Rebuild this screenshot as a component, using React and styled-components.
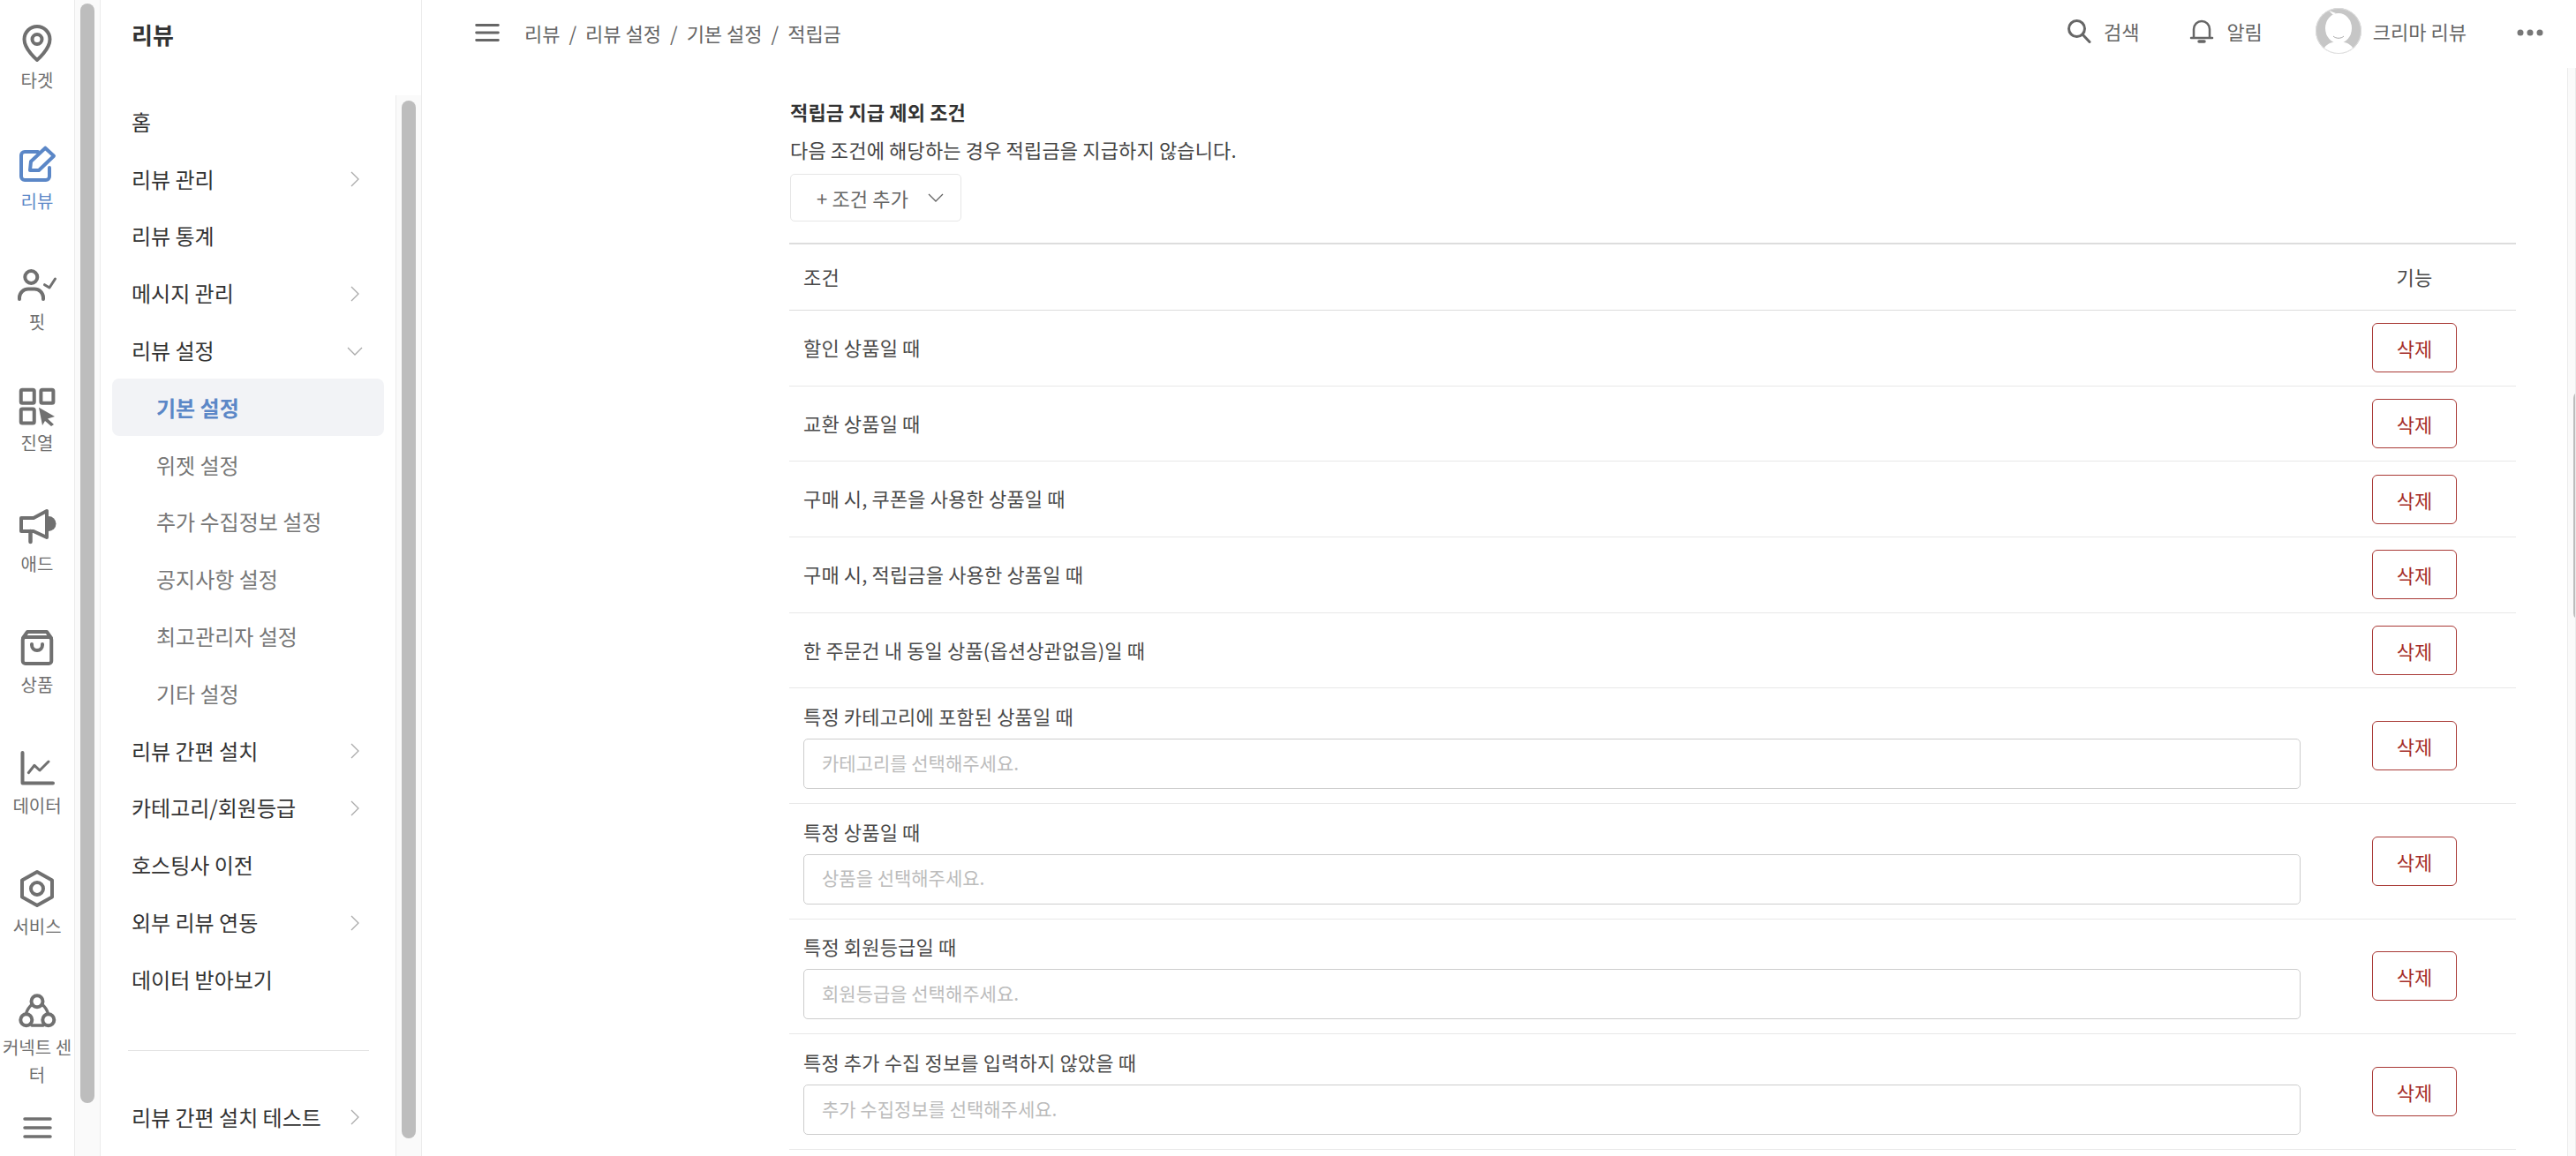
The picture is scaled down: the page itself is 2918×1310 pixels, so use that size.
import React from "react";
import styled, { createGlobalStyle } from "styled-components";

const GlobalStyle = createGlobalStyle`
  * { box-sizing: border-box; }
  html, body { margin: 0; height: 100%; background: #fff; }
  body {
    font-family: "Noto Sans CJK KR", "Noto Sans", "Liberation Sans", sans-serif;
    color: #444;
    overflow: hidden;
  }
`;

const Page = styled.div`
  display: flex;
  height: 1310px;
  overflow: hidden;
`;

/* scrollbars */
const Track = styled.div`
  flex: none;
  width: ${props => props.$width || 30}px;
  padding: ${props => props.$top || 0}px 0 0 6px;
  background: #fafafa;
  border-left: 1px solid #ebebeb;
  border-right: 1px solid #ebebeb;
  overflow: hidden;
`;

const Thumb = styled.div`
  width: 16px;
  height: ${props => props.$height}px;
  border-radius: 8px;
  background: #bdbdbd;
`;

/* icon rail */
const Rail = styled.nav`
  flex: none;
  width: 84px;
  height: 100%;
  display: flex;
  flex-direction: column;
`;

const RailItem = styled.div`
  flex: none;
  height: 137px;
  padding-top: 25px;
  display: flex;
  flex-direction: column;
  align-items: center;
  gap: 4px;
  color: ${props => (props.$active ? "#5b87c7" : "#707070")};
  font-size: 20px;
  line-height: 31px;
  text-align: center;
  svg { flex: none; }
`;

const RailLabel = styled.span`
  width: 84px;
  margin-top: -2px;
`;

const RailFoot = styled.div`
  margin-top: auto;
  padding-bottom: 19px;
  display: flex;
  justify-content: center;
  color: #707070;
`;

/* menu panel */
const Panel = styled.aside`
  flex: none;
  width: 364px;
  height: 100%;
  display: flex;
  flex-direction: column;
`;

const PanelHead = styled.div`
  flex: none;
  height: 108px;
  padding: 15px 0 0 35px;
  font-size: 26px;
  line-height: 48px;
  font-weight: 700;
  color: #333;
  border-right: 1px solid #ebebeb;
`;

const PanelBody = styled.div`
  flex: 1;
  min-height: 0;
  display: flex;
`;

const Menu = styled.ul`
  flex: 1;
  margin: -3px 0 0;
  padding: 0 13px;
  list-style: none;
`;

const MenuItem = styled.li`
  height: 64.8px;
  display: flex;
  align-items: center;
  justify-content: space-between;
  padding: 0 24px 0 ${props => (props.$sub ? 50 : 22)}px;
  border-radius: 8px;
  font-size: 24px;
  font-weight: ${props => (props.$active ? 700 : 400)};
  color: ${props => (props.$active ? "#5b87c7" : props.$sub ? "#777" : "#333")};
  background: ${props => (props.$active ? "#f2f3f6" : "transparent")};
  svg { margin-top: 2px; }
`;

const MenuRule = styled.li`
  height: 1px;
  margin: 48px 17px 42px 18px;
  background: #e2e2e2;
`;

/* main area */
const Main = styled.main`
  flex: 1;
  min-width: 0;
  height: 100%;
  display: flex;
  flex-direction: column;
`;

const TopBar = styled.header`
  flex: none;
  height: 77px;
  display: flex;
  align-items: center;
  padding: 0 37px 3px 60px;
  color: #666;
  font-size: 22px;
`;

const Crumbs = styled.div`
  margin-left: 28px;
  display: flex;
  gap: 10px;
  white-space: nowrap;
`;

const TopAction = styled.div`
  display: flex;
  align-items: center;
  gap: ${props => props.$inner || 14}px;
  margin-left: ${props => props.$gap || 0}px;
  margin-top: -4px;
  white-space: nowrap;
`;

const TopRight = styled.div`
  margin-left: auto;
  display: flex;
  align-items: center;
`;

const Dots = styled.svg`
  margin-left: 57px;
`;

const Body = styled.div`
  flex: 1;
  min-height: 0;
  display: flex;
`;

const Content = styled.section`
  flex: 1;
  min-width: 0;
  padding: 34px 58px 0 417px;
  overflow: hidden;
  letter-spacing: 0.15px;
`;

const Title = styled.h3`
  margin: 0;
  font-size: 22px;
  line-height: 30px;
  font-weight: 700;
  color: #333;
`;

const Desc = styled.p`
  margin: 12px 0;
  font-size: 22px;
  line-height: 32px;
  color: #444;
`;

const AddButton = styled.div`
  width: 194px;
  height: 54px;
  padding-left: 29px;
  display: flex;
  align-items: center;
  gap: 22px;
  border: 1px solid #e6e6e6;
  border-radius: 5px;
  font-size: 22px;
  color: #666;
  white-space: nowrap;
`;

const Table = styled.div`
  margin: 24px 0 0 -1px;
  border-top: 2px solid #ddd;
`;

const Row = styled.div`
  display: grid;
  grid-template-columns: 1fr 230px;
  align-items: center;
  height: ${props => props.$height}px;
  border-bottom: 1px solid ${props => (props.$head ? "#dcdcdc" : "#e8e8e8")};
  font-size: 22px;
  color: #4a4a4a;
`;

const Condition = styled.div`
  padding: 0 14px ${props => (props.$plain ? 3 : 0)}px 16px;
`;

const Label = styled.div`
  line-height: 30px;
`;

const Field = styled.input`
  display: block;
  width: 100%;
  height: 57px;
  margin-top: 11px;
  padding: 0 20px 4px;
  border: 1px solid #cdcdcd;
  border-radius: 5px;
  background: #fff;
  font-family: inherit;
  font-size: 21px;
  outline: none;
  &::placeholder { color: #bcbcbc; opacity: 1; }
`;

const Action = styled.div`
  text-align: center;
  padding-bottom: ${props => (props.$head ? 3 : 0)}px;
`;

const DeleteButton = styled.button`
  width: 96px;
  height: 56px;
  padding: 0;
  border: 1.5px solid #a93a36;
  border-radius: 6px;
  background: #fff;
  font: inherit;
  color: #a52f2b;
`;

const Icon = ({ children, size = 48, stroke = 4 }) => (
  <svg width={size} height={size} viewBox="0 0 48 48" fill="none" stroke="currentColor" strokeWidth={stroke} strokeLinecap="round" strokeLinejoin="round">
    {children}
  </svg>
);

const Chevron = ({ down, color = "#aaa", size = 18 }) => (
  <svg width={size} height={size} viewBox="0 0 18 18" fill="none" stroke={color} strokeWidth="1.3">
    <path d={down ? "M1 5l8 8 8-8" : "M5 1l8 8-8 8"} />
  </svg>
);

const railItems = [
  { label: "타겟", icon: <><path d="M24 43C24 43 9.5 31 9.5 19.5a14.5 14.5 0 0 1 29 0C38.500 31 24 43 24 43Z" /><circle cx="24" cy="19.500" r="5.500" /></> },
  { label: "리뷰", active: true, icon: <><path d="M25 10H10a4 4 0 0 0-4 4v24a4 4 0 0 0 4 4h24a4 4 0 0 0 4-4V28" /><path d="M16 31l1-10L33.300 5.700 43 14.700 26 31Z" /></> },
  { label: "핏", icon: <><circle cx="17.300" cy="15" r="7" /><path d="M4 40v-2a10 10 0 0 1 10-9.500h7a10 10 0 0 1 10 9.500v2" /><path d="M32.500 23.700L38 27l6.500-10" strokeWidth="3" /></> },
  { label: "진열", icon: <><rect x="5.750" y="5.750" width="15" height="15" rx="1.500" /><rect x="28.400" y="5.750" width="14" height="15" rx="1.500" /><rect x="5.750" y="27.500" width="15" height="16" rx="1.500" /><path d="M26 25.700L44 36l-8 2.500 7 6.500-3 2-7-6-3 5Z" fill="currentColor" stroke="none" /></> },
  { label: "애드", icon: <><path d="M6 14h14l15-8v30l-15-7H6Z" /><path d="M16.500 29v12" strokeWidth="4.500" /><path d="M37 12a8 8 0 0 1 0 17Z" fill="currentColor" stroke="none" /></> },
  { label: "상품", icon: <><rect x="7.750" y="12" width="32.500" height="30" rx="3" /><path d="M8 13l5-7h22l5 7" /><path d="M18 20v1a6 6 0 0 0 12 0v-1" /></> },
  { label: "데이터", icon: <><path d="M7.500 6v34.500H42" /><path d="M14.300 28.700L21 20.300l6 5.700L37 16" strokeWidth="3" /></> },
  { label: "서비스", icon: <><path d="M24 4l17 9.500v19L24 42 7 32.500v-19Z" /><circle cx="24" cy="23" r="7" /></> },
  { label: "커넥트 센터", icon: <><circle cx="24" cy="13.800" r="6.500" /><circle cx="11.800" cy="34.800" r="6.500" /><circle cx="36.800" cy="34.800" r="6.500" /><path d="M18.500 17C15 20 12.500 23.500 11.500 28M29.500 17c3.500 3 6 6.500 7 11M18 41h13" strokeWidth="3.500" /></> },
];

const menuItems = [
  { label: "홈" },
  { label: "리뷰 관리", arrow: true },
  { label: "리뷰 통계" },
  { label: "메시지 관리", arrow: true },
  { label: "리뷰 설정", open: true },
  { label: "기본 설정", sub: true, active: true },
  { label: "위젯 설정", sub: true },
  { label: "추가 수집정보 설정", sub: true },
  { label: "공지사항 설정", sub: true },
  { label: "최고관리자 설정", sub: true },
  { label: "기타 설정", sub: true },
  { label: "리뷰 간편 설치", arrow: true },
  { label: "카테고리/회원등급", arrow: true },
  { label: "호스팅사 이전" },
  { label: "외부 리뷰 연동", arrow: true },
  { label: "데이터 받아보기" },
];

const simpleRows = [
  "할인 상품일 때",
  "교환 상품일 때",
  "구매 시, 쿠폰을 사용한 상품일 때",
  "구매 시, 적립금을 사용한 상품일 때",
  "한 주문건 내 동일 상품(옵션상관없음)일 때",
];

const fieldRows = [
  { label: "특정 카테고리에 포함된 상품일 때", hint: "카테고리를 선택해주세요." },
  { label: "특정 상품일 때", hint: "상품을 선택해주세요." },
  { label: "특정 회원등급일 때", hint: "회원등급을 선택해주세요." },
  { label: "특정 추가 수집 정보를 입력하지 않았을 때", hint: "추가 수집정보를 선택해주세요." },
];

const Menus = ({ item }) => (
  <MenuItem $sub={item.sub} $active={item.active}>
    {item.label}
    {item.arrow && <Chevron />}
    {item.open && <Chevron down />}
  </MenuItem>
);

const Burger = ({ width }) => (
  <svg width={width} height="26" viewBox="0 0 33 26" stroke="currentColor" strokeWidth="3.500" strokeLinecap="round">
    <path d="M2 3h29M2 13h29M2 23h29" />
  </svg>
);

const Avatar = () => (
  <svg width="52" height="52" viewBox="0 0 52 52">
    <defs>
      <clipPath id="avatarClip"><circle cx="26" cy="26" r="26" /></clipPath>
    </defs>
    <g clipPath="url(#avatarClip)">
      <rect width="52" height="52" fill="#c6c6c6" />
      <ellipse cx="26" cy="23" rx="15" ry="17" fill="#fff" />
      <path d="M20 8l-5-5 8 3z" fill="#fff" />
      <path d="M8 52c0-9 8-14 18-14s18 5 18 14z" fill="#fff" />
      <path d="M20 32c3 3 9 3 12 0" fill="none" stroke="#aaa" strokeWidth="1" />
    </g>
    <circle cx="26" cy="26" r="25.500" fill="none" stroke="#ddd" />
  </svg>
);

export default function App() {
  return (
    <Page>
      <GlobalStyle />
      <Rail>
        {railItems.map(item => (
          <RailItem key={item.label} $active={item.active}>
            <Icon>{item.icon}</Icon>
            <RailLabel>{item.label}</RailLabel>
          </RailItem>
        ))}
        <RailFoot>
          <Burger width={33} />
        </RailFoot>
      </Rail>
      <Track $top={4}>
        <Thumb $height={1246} />
      </Track>

      <Panel>
        <PanelHead>리뷰</PanelHead>
        <PanelBody>
          <Menu>
            {menuItems.map(item => (
              <Menus key={item.label} item={item} />
            ))}
            <MenuRule />
            <Menus item={{ label: "리뷰 간편 설치 테스트", arrow: true }} />
          </Menu>
          <Track $top={6}>
            <Thumb $height={1176} />
          </Track>
        </PanelBody>
      </Panel>

      <Main>
        <TopBar>
          <Burger width={28} />
          <Crumbs>
            <span>리뷰</span>
            <span>/</span>
            <span>리뷰 설정</span>
            <span>/</span>
            <span>기본 설정</span>
            <span>/</span>
            <span>적립금</span>
          </Crumbs>
          <TopRight>
            <TopAction>
              <svg width="28" height="28" viewBox="0 0 28 28" fill="none" stroke="currentColor" strokeWidth="3" strokeLinecap="round">
                <circle cx="11.500" cy="11.500" r="9" />
                <path d="M18 18l8 8.500" />
              </svg>
              검색
            </TopAction>
            <TopAction $gap={57}>
              <svg width="28" height="30" viewBox="0 0 28 30" fill="none" stroke="currentColor" strokeWidth="2.500" strokeLinecap="round">
                <path d="M5 22V13a9 9 0 0 1 18 0v9M2 23h24" />
                <path d="M11 27h6" strokeWidth="3.500" />
              </svg>
              알림
            </TopAction>
            <TopAction $gap={60} $inner={13}>
              <Avatar />
              크리마 리뷰
            </TopAction>
            <Dots width="30" height="10" viewBox="0 0 30 10" fill="#777">
              <circle cx="4" cy="5" r="3.500" />
              <circle cx="15" cy="5" r="3.500" />
              <circle cx="26" cy="5" r="3.500" />
            </Dots>
          </TopRight>
        </TopBar>

        <Body>
          <Content>
            <Title>적립금 지급 제외 조건</Title>
            <Desc>다음 조건에 해당하는 경우 적립금을 지급하지 않습니다.</Desc>
            <AddButton>
              + 조건 추가
              <Chevron down color="#666" />
            </AddButton>
            <Table>
              <Row $head $height={75}>
                <Condition $plain>조건</Condition>
                <Action $head>기능</Action>
              </Row>
              {simpleRows.map(label => (
                <Row key={label} $height={85.7}>
                  <Condition $plain>{label}</Condition>
                  <Action>
                    <DeleteButton>삭제</DeleteButton>
                  </Action>
                </Row>
              ))}
              {fieldRows.map(row => (
                <Row key={row.label} $height={130.6}>
                  <Condition>
                    <Label>{row.label}</Label>
                    <Field placeholder={row.hint} readOnly />
                  </Condition>
                  <Action>
                    <DeleteButton>삭제</DeleteButton>
                  </Action>
                </Row>
              ))}
            </Table>
          </Content>
          <Track $width={10} $top={366}>
            <Thumb $height={260} />
          </Track>
        </Body>
      </Main>
    </Page>
  );
}
